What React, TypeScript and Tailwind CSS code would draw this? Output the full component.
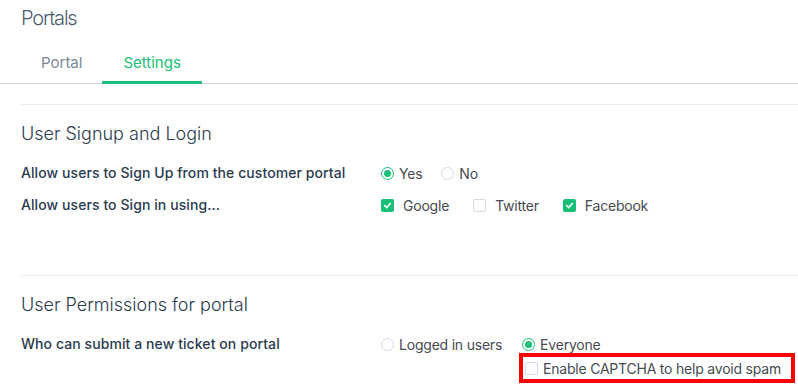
import React from 'react';

const Radio: React.FC<{ checked?: boolean; label: string }> = ({ checked, label }) => (
  <label className="flex items-center gap-[5px] text-[14px] tracking-[-0.015em] text-[#464b51]">
    <span
      className={`flex h-[13px] w-[13px] items-center justify-center rounded-full bg-white ${
        checked ? 'border-[1.5px] border-[#18bf76]' : 'border border-[#d5dadf]'
      }`}
    >
      {checked && <span className="h-[7px] w-[7px] rounded-full bg-[#18bf76]" />}
    </span>
    {label}
  </label>
);

const Checkbox: React.FC<{ checked?: boolean; label: string }> = ({ checked, label }) => (
  <label className="flex items-center gap-[9px] text-[14px] tracking-[-0.015em] text-[#464b51]">
    {checked ? (
      <span className="flex h-[13px] w-[13px] items-center justify-center rounded-[2px] bg-[#18bf76]">
        <svg width="9" height="9" viewBox="0 0 10 10">
          <path d="M2 5.2 L4.2 7.3 L8.2 2.8" stroke="white" strokeWidth="1.8" fill="none" strokeLinecap="round" strokeLinejoin="round" />
        </svg>
      </span>
    ) : (
      <span className="h-[13px] w-[13px] rounded-[2px] border border-[#d5dadf] bg-white" />
    )}
    {label}
  </label>
);

const Row: React.FC<{ label: string; children: React.ReactNode; className?: string }> = ({ label, children, className }) => (
  <div className={`flex ${className ?? ''}`}>
    <div className="w-[360px] shrink-0 text-[14px] font-medium leading-[20px] tracking-[0.08px] text-[#2b3b4e]">{label}</div>
    <div className="flex flex-col">{children}</div>
  </div>
);

const App: React.FC = () => {
  return (
    <div className="min-h-screen w-full bg-white font-['Inter',sans-serif]">
      {/* Page title */}
      <div className="pl-[21px] pt-[6px] text-[20px] font-light leading-[24px] tracking-[-0.06em] text-[#4d5d70]">Portals</div>

      {/* Tabs */}
      <div className="mt-[16px] flex border-b border-[#cfcfcf] pl-[21px]">
        <div className="-mb-px border-b-[3px] border-transparent px-5 pt-[7px] pb-[8px] text-[15px] leading-[20px] text-[#7c8894]">Portal</div>
        <div className="-mb-px border-b-[3px] border-[#18bf76] px-[21px] pt-[7px] pb-[8px] text-[15px] leading-[20px] text-[#18bf76]">
          Settings
        </div>
      </div>

      <div className="pl-[21px]">
        <div className="mt-[20px] border-t border-[#ebebeb]" />

        {/* User Signup and Login */}
        <h2 className="mt-[17px] text-[18px] font-light leading-[24px] text-[#2b3b4e]">User Signup and Login</h2>

        <Row label="Allow users to Sign Up from the customer portal" className="mt-[17px]">
          <div className="flex h-[20px] items-center gap-[19px]">
            <Radio checked label="Yes" />
            <Radio label="No" />
          </div>
        </Row>

        <Row label="Allow users to Sign in using..." className="mt-[12px]">
          <div className="flex h-[20px] items-center gap-[24px]">
            <Checkbox checked label="Google" />
            <Checkbox label="Twitter" />
            <Checkbox checked label="Facebook" />
          </div>
        </Row>

        <div className="mt-[60px] border-t border-[#ebebeb]" />

        {/* User Permissions for portal */}
        <h2 className="mt-[17px] text-[18px] font-light leading-[24px] text-[#2b3b4e]">User Permissions for portal</h2>

        <Row label="Who can submit a new ticket on portal" className="mt-[17px]">
          <div className="flex h-[20px] items-center gap-[20px]">
            <Radio label="Logged in users" />
            <Radio checked label="Everyone" />
          </div>
        </Row>
        <div className="ml-[498px] mt-[-1px] flex h-[30px] w-[276px] items-center border-4 border-[#ff0000] pl-[2px]">
          <label className="flex items-center gap-[5px] text-[14px] tracking-[-0.015em] text-[#464b51]">
            <span className="h-[13px] w-[13px] rounded-[2px] border border-[#d5dadf] bg-white" />
            Enable CAPTCHA to help avoid spam
          </label>
        </div>
      </div>
    </div>
  );
};

export default App;
